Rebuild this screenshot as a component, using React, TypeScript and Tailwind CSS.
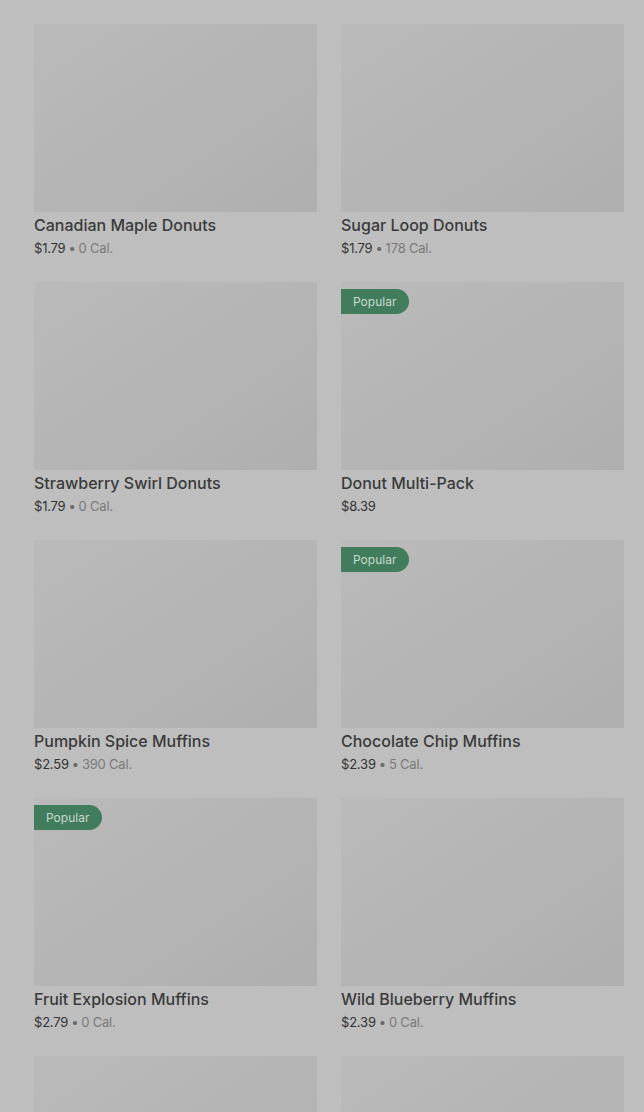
import React from 'react';

type Item = { name?: string; price?: string; cal?: string; popular?: boolean };

const items: Item[] = [
  { name: 'Canadian Maple Donuts', price: '$1.79', cal: '0 Cal.' },
  { name: 'Sugar Loop Donuts', price: '$1.79', cal: '178 Cal.' },
  { name: 'Strawberry Swirl Donuts', price: '$1.79', cal: '0 Cal.' },
  { name: 'Donut Multi-Pack', price: '$8.39', popular: true },
  { name: 'Pumpkin Spice Muffins', price: '$2.59', cal: '390 Cal.' },
  { name: 'Chocolate Chip Muffins', price: '$2.39', cal: '5 Cal.', popular: true },
  { name: 'Fruit Explosion Muffins', price: '$2.79', cal: '0 Cal.', popular: true },
  { name: 'Wild Blueberry Muffins', price: '$2.39', cal: '0 Cal.' },
  // next row is only partly scrolled into view
  {},
  {},
];

export default function App() {
  return (
    <div
      className="h-[1112px] overflow-hidden bg-[#bebebe] pl-[34px] pr-[20px] pt-[24px]"
      style={{ fontFamily: 'Inter, "Liberation Sans", sans-serif' }}
    >
      <div className="grid grid-cols-2 gap-x-[24px] gap-y-[24px]">
        {items.map((item, i) => (
          <div key={i} className="flex flex-col">
            <div className="relative h-[188px] bg-gradient-to-br from-[#bababa] via-[#b5b5b5] to-[#afafaf]">
              {item.popular && (
                <span className="absolute left-0 top-[7px] flex h-[25px] items-center rounded-r-full bg-[#417d5c] pl-[12px] pr-[13px] text-[12px] text-[#c7d9cd]">
                  Popular
                </span>
              )}
            </div>
            {item.name && (
              <>
                <div className="mt-[2px] text-[16px] font-medium leading-[22px] text-[#3a3a3a]">{item.name}</div>
                <div className="mt-[2px] text-[13px] leading-[20px] tracking-[-0.2px]">
                  <span className="text-[#333]">{item.price}</span>
                  {item.cal && (
                    <>
                      <span className="mx-[3px] text-[#6a6a6a]">•</span>
                      <span className="text-[#7a7a7a]">{item.cal}</span>
                    </>
                  )}
                </div>
              </>
            )}
          </div>
        ))}
      </div>
    </div>
  );
}
